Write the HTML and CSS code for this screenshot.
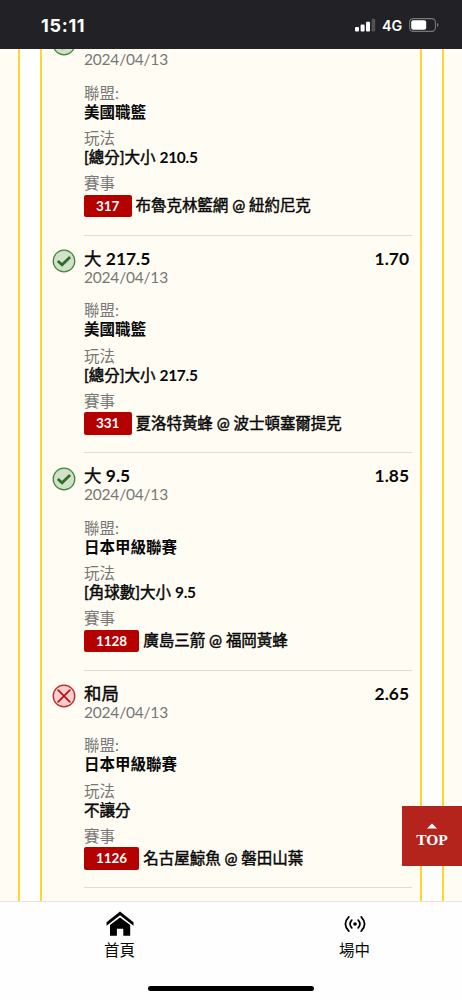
FILE: index.html
```html
<!DOCTYPE html>
<html lang="zh-Hant">
<head>
<meta charset="utf-8">
<title>2024/04/13</title>
<link rel="stylesheet" href="styles.css">
</head>
<body>
<svg class="defs" aria-hidden="true">
  <symbol id="win" viewBox="0 0 24 24"><circle cx="12" cy="12" r="10.8" fill="#d3e1cc" stroke="#3f8a36" stroke-width="1.3"/><path d="M5.8 12l4.3 3.8 8-7.8" fill="none" stroke="#2b7020" stroke-width="2.7"/></symbol>
  <symbol id="lose" viewBox="0 0 24 24"><circle cx="12" cy="12" r="10.8" fill="#f3d0cb" stroke="#bd2028" stroke-width="1.3"/><path d="M6.2 6.2l11.6 11.6M17.8 6.2L6.2 17.8" fill="none" stroke="#b9141a" stroke-width="1.8" stroke-linecap="round"/></symbol>
</svg>
<div class="screen">
  <header class="status">
    <span class="clock">15:11</span>
    <div class="signals">
      <svg class="bars" viewBox="0 0 21 14"><rect x="0" y="9" width="4" height="4.5" rx="1" fill="#fff"/><rect x="5.6" y="6.5" width="4" height="7" rx="1" fill="#fff"/><rect x="11" y="3.7" width="4" height="9.8" rx="1" fill="#fff"/><rect x="16.6" y=".8" width="3.6" height="12.7" rx="1" fill="#505055"/></svg>
      <span class="network">4G</span>
      <svg class="battery" viewBox="0 0 30 14"><rect x=".6" y=".6" width="25.8" height="12.8" rx="3.6" fill="none" stroke="#77777b" stroke-width="1.1"/><rect x="2.2" y="2.2" width="15" height="9.6" rx="2" fill="#fff"/><path d="M28 5v4q1.5-.7 1.5-2T28 5z" fill="#77777b"/></svg>
    </div>
  </header>
  <main class="viewport">
    <div class="frame">
      <ul class="bets">
        <li class="bet">
          <svg class="result"><use href="#win"/></svg>
          <div class="detail">
            <div class="head"></div>
            <div class="date">2024/04/13</div>
            <dl>
              <dt>聯盟:</dt><dd>美國職籃</dd>
              <dt>玩法</dt><dd class="play">[總分]大小 <b>210.5</b></dd>
              <dt>賽事</dt><dd class="match"><span class="code">317</span><span>布魯克林籃網 @ 紐約尼克</span></dd>
            </dl>
          </div>
        </li>
        <li class="bet">
          <svg class="result"><use href="#win"/></svg>
          <div class="detail">
            <div class="head"><span>大 <b>217.5</b></span><b>1.70</b></div>
            <div class="date">2024/04/13</div>
            <dl>
              <dt>聯盟:</dt><dd>美國職籃</dd>
              <dt>玩法</dt><dd class="play">[總分]大小 <b>217.5</b></dd>
              <dt>賽事</dt><dd class="match"><span class="code">331</span><span>夏洛特黃蜂 @ 波士頓塞爾提克</span></dd>
            </dl>
          </div>
        </li>
        <li class="bet">
          <svg class="result"><use href="#win"/></svg>
          <div class="detail">
            <div class="head"><span>大 <b>9.5</b></span><b>1.85</b></div>
            <div class="date">2024/04/13</div>
            <dl>
              <dt>聯盟:</dt><dd>日本甲級聯賽</dd>
              <dt>玩法</dt><dd class="play">[角球數]大小 <b>9.5</b></dd>
              <dt>賽事</dt><dd class="match"><span class="code">1128</span><span>廣島三箭 @ 福岡黃蜂</span></dd>
            </dl>
          </div>
        </li>
        <li class="bet">
          <svg class="result"><use href="#lose"/></svg>
          <div class="detail">
            <div class="head"><span>和局</span><b>2.65</b></div>
            <div class="date">2024/04/13</div>
            <dl>
              <dt>聯盟:</dt><dd>日本甲級聯賽</dd>
              <dt>玩法</dt><dd class="play">不讓分</dd>
              <dt>賽事</dt><dd class="match"><span class="code">1126</span><span>名古屋鯨魚 @ 磐田山葉</span></dd>
            </dl>
          </div>
        </li>
      </ul>
    </div>
  </main>
  <nav class="tabs">
    <a class="tab">
      <svg class="home" viewBox="0 0 28 25"><path d="M.5 11.3L14 .4l13.5 10.9v3.5L14 4.3.5 14.8z"/><path d="M4 14L14 6.4 24.2 14v10.7h-6.9v-6.9h-6.4v6.9H4z"/></svg>
      <span>首頁</span>
    </a>
    <a class="tab">
      <svg class="live" viewBox="0 0 22 25"><circle cx="11" cy="13" r="1.8"/><path d="M7.8 9.1q-3.5 3.9 0 7.8M14.2 9.1q3.5 3.9 0 7.8M4.8 5.8q-6.8 7.2 0 14.4M17.2 5.8q6.8 7.2 0 14.4" fill="none" stroke="#000" stroke-width="1.7" stroke-linecap="round"/></svg>
      <span>場中</span>
    </a>
  </nav>
  <a class="to-top"><svg viewBox="0 0 10 6"><path d="M0 5.6L5 .4l5 5.2z" fill="#fff"/></svg>TOP</a>
  <div class="home-indicator"></div>
</div>
</body>
</html>
```
FILE: styles.css
```css
* { box-sizing: border-box; }
body { margin: 0; background: #fefefe; color: #080808; font-family: Lato, "Noto Sans CJK TC", sans-serif; font-size: 15.5px; }
.defs { position: absolute; width: 0; height: 0; }
.screen { position: relative; display: flex; flex-direction: column; height: 1000px; overflow: hidden; }
.status { flex: none; display: flex; justify-content: space-between; height: 49px; padding: 14px 23px 0 41px; background: #212126; color: #fff; font-family: Inter, sans-serif; }
.clock { font-size: 18px; font-weight: 700; line-height: 23px; letter-spacing: .7px; }
.signals { display: flex; align-items: center; height: 22px; }
.bars { width: 21px; height: 14px; }
.network { margin: 0 6px; font-size: 14.3px; font-weight: 600; width: 21px; }
.battery { width: 30px; height: 14px; }
.viewport { flex: none; height: 852px; padding: 0 18px; overflow: hidden; background: #fffcf3; }
.frame { height: 852px; padding: 0 20px; border: solid #ffd52e; border-width: 0 2px; background: #fff; }
.bets { display: flex; flex-direction: column; height: 852px; margin: 0; padding: 0 8px 0 10px; border: solid #ffd52e; border-width: 0 2px; background: #fffdf3; list-style: none; }
.bet { flex: none; display: flex; gap: 8px; height: 217.5px; }
.bet:first-child { margin-top: -31px; }
.result { flex: none; width: 24px; height: 24px; margin-top: 13.5px; }
.detail { flex: 1; padding-top: 13px; border-bottom: 1px solid #dfddd5; }
.head { display: flex; justify-content: space-between; height: 19px; padding-right: 3px; font-size: 17.4px; line-height: 20px; }
.head span { -webkit-text-stroke: .45px #080808; }
.head b { font-weight: 700; -webkit-text-stroke: 0; }
.date { color: #777; line-height: 19px; letter-spacing: -.2px; }
dl { margin: 14.5px 0 0; line-height: 19px; }
dt { height: 19px; color: #777; }
dd { height: 19px; margin: 0 0 7.8px; font-weight: 600; white-space: nowrap; }
dd b { font-weight: 700; letter-spacing: -.3px; -webkit-text-stroke: 0; }
.play { font-weight: 400; margin-bottom: 7.2px; -webkit-text-stroke: .5px #080808; }
.match { display: flex; align-items: center; gap: 4px; height: 25px; margin: 0; font-weight: 400; line-height: 23px; letter-spacing: -.05px; -webkit-text-stroke: .45px #080808; }
.code { height: 22.5px; margin-left: -.4px; padding: 0 12.3px; border-radius: 2px; background: #b50000; color: #fff; font-size: 13.5px; font-weight: 700; line-height: 22px; -webkit-text-stroke: 0; }
.tabs { flex: 1; display: flex; padding: 9px 0 0; border-top: 1px solid #e5e4e2; background: #fefefe; }
.tab { flex: none; width: 235px; display: flex; flex-direction: column; align-items: center; gap: 2px; font-size: 15.5px; line-height: 24px; }
.tab:first-child { margin-left: 2px; }
.home { width: 28px; height: 25px; }
.live { width: 22px; height: 25px; }
.to-top { position: absolute; right: 0; top: 806px; width: 60px; height: 60px; padding-top: 17px; background: #b5241c; color: #fff; font: 700 15.5px/18px "Liberation Serif", serif; text-align: center; }
.to-top svg { display: block; width: 10px; height: 6px; margin: 0 auto 2px; }
.home-indicator { position: absolute; left: 148px; top: 986px; width: 166px; height: 5px; border-radius: 3px; background: #000; }
```
